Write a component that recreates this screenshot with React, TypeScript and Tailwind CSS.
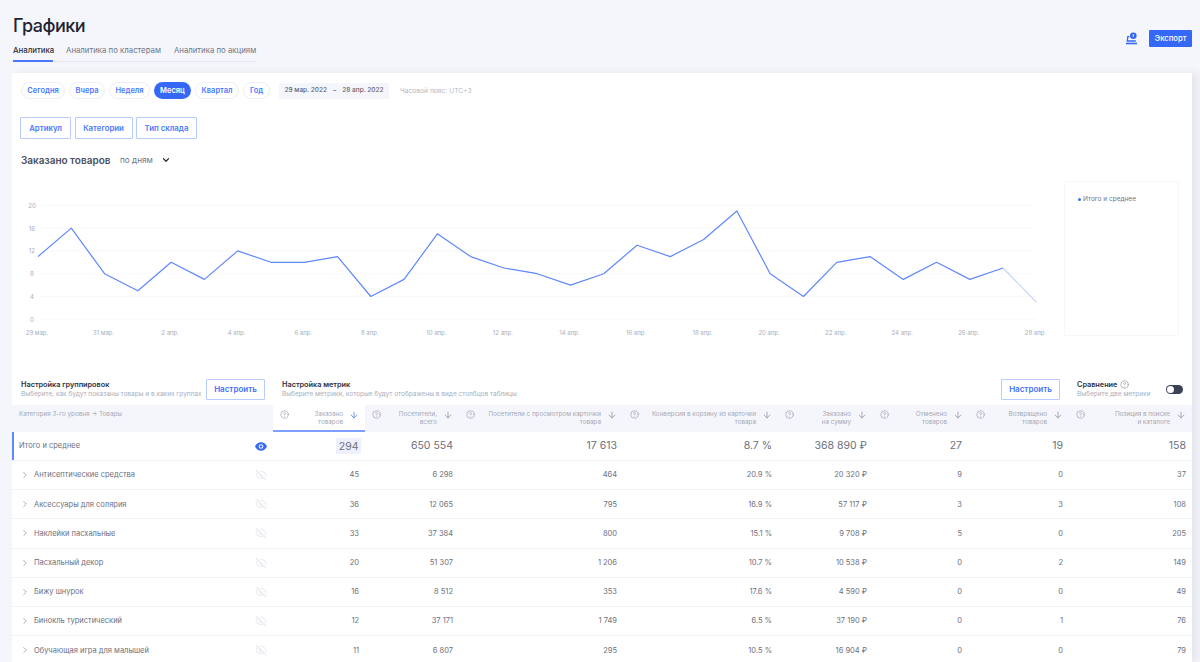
import React from "react";
import { ArrowDown, ChevronDown, ChevronRight, CircleHelp, EyeOff } from "lucide-react";

const data = [11, 16, 8, 5, 10, 7, 12, 10, 10, 11, 4, 7, 15, 11, 9, 8, 6, 8, 13, 11, 14, 19, 8, 4, 10, 11, 7, 10, 7, 9, 3];
const X = (i: number) => 26 + i * 33.28;
const Y = (v: number) => 152.3 - v * 5.7;
const labels = ["29 мар.", "31 мар.", "2 апр.", "4 апр.", "6 апр.", "8 апр.", "10 апр.", "12 апр.", "14 апр.", "16 апр.", "18 апр.", "20 апр.", "22 апр.", "24 апр.", "26 апр.", "28 апр."];

const periods = [
  { t: "Сегодня", w: "w-[44px]" },
  { t: "Вчера", w: "w-[36px]" },
  { t: "Неделя", w: "w-[41px]" },
  { t: "Месяц", w: "w-[37px]", active: true },
  { t: "Квартал", w: "w-[44px]" },
  { t: "Год", w: "w-[27px]" },
];

const headers = [
  { t: "Заказано\nтоваров", active: true },
  { t: "Посетители,\nвсего" },
  { t: "Посетители с просмотром карточки\nтовара" },
  { t: "Конверсия в корзину из карточки\nтовара" },
  { t: "Заказано\nна сумму" },
  { t: "Отменено\nтоваров" },
  { t: "Возвращено\nтоваров" },
  { t: "Позиция в поиске\nи каталоге" },
];

const rows = [
  ["Антисептические средства", "45", "6 298", "464", "20.9 %", "20 320 ₽", "9", "0", "37"],
  ["Аксессуары для солярия", "36", "12 065", "795", "16.9 %", "57 117 ₽", "3", "3", "108"],
  ["Наклейки пасхальные", "33", "37 384", "800", "15.1 %", "9 708 ₽", "5", "0", "205"],
  ["Пасхальный декор", "20", "51 307", "1 206", "10.7 %", "10 538 ₽", "0", "2", "149"],
  ["Бижу шнурок", "16", "8 512", "353", "17.6 %", "4 590 ₽", "0", "0", "49"],
  ["Бинокль туристический", "12", "37 171", "1 749", "6.5 %", "37 190 ₽", "0", "1", "76"],
  ["Обучающая игра для малышей", "11", "6 807", "295", "10.5 %", "16 904 ₽", "0", "0", "79"],
];

const cols = "grid grid-cols-[261px_92px_94px_164px_155px_95px_96px_100px_123px]";

function ConfigButton() {
  return (
    <button className="w-[59px] h-[21px] border border-[#b9ccff] rounded-[1px] bg-white text-[#3f6ffb] text-[8px] font-semibold">
      Настроить
    </button>
  );
}

function SolidEye() {
  return (
    <svg width="12" height="9" viewBox="0 0 12 9" aria-hidden="true">
      <path d="M0 4.5C1.4 1.7 3.5.3 6 .3s4.6 1.4 6 4.2C10.6 7.3 8.5 8.7 6 8.7S1.4 7.3 0 4.5Z" fill="#3568f6" />
      <circle cx="6" cy="4.5" r="2.3" fill="#fff" />
      <circle cx="6" cy="4.5" r="1.3" fill="#3568f6" />
    </svg>
  );
}

export default function App() {
  return (
    <div className="w-[1200px] h-[662px] overflow-hidden bg-[#f5f6fb] font-['Inter',sans-serif] text-[#6b7280]">
      <header className="h-[73px] pl-[13px] pr-[8px] flex justify-between">
        <div className="pt-[14px]">
          <h1 className="text-[18px] leading-[24px] tracking-[-0.5px] font-medium text-[#1f2433]">Графики</h1>
          <nav className="mt-[3px] w-[243px] flex gap-[13px] border-b border-[#e6e8f0] h-[21px] text-[7.8px] leading-[14px] pt-[2px] text-[#6f7585] whitespace-nowrap">
            <span className="w-[40px] h-[19px] border-b-2 border-[#4a78ff] text-[#2b3040] font-medium">Аналитика</span>
            <span>Аналитика по кластерам</span>
            <span>Аналитика по акциям</span>
          </nav>
        </div>
        <div className="flex items-center gap-[12px] h-[77px]">
          <svg width="13" height="13" viewBox="0 0 13 13" fill="none" aria-hidden="true">
            <circle cx="9.3" cy="3.7" r="3.3" fill="#3568f6" />
            <rect x="8.8" y="2.2" width="1" height="2.6" fill="#fff" />
            <path d="M5.5 4.7H3.8L3.3 9H11.8" stroke="#3568f6" strokeWidth="1.3" />
            <path d="M2 11.5H13" stroke="#3568f6" strokeWidth="1.6" />
          </svg>
          <button className="w-[43px] h-[17px] rounded-[1px] bg-[#3568f6] text-white text-[7.7px] font-medium">Экспорт</button>
        </div>
      </header>

      <main className="w-[1180px] ml-[12px] bg-white shadow-[6px_0_8px_rgba(30,40,70,0.07)] h-[589px]">
        <div className="pt-[9px] pl-[9px] flex items-center h-[26px]">
          <div className="flex gap-[4px]">
            {periods.map((p) => (
              <span
                key={p.t}
                className={`${p.w} h-[17px] rounded-full flex items-center justify-center text-[7.5px] font-semibold ${
                  p.active ? "bg-[#3568f6] text-white" : "border border-[#eceef4] text-[#4a78ff]"
                }`}
              >
                {p.t}
              </span>
            ))}
          </div>
          <div className="ml-[9px] w-[110px] h-[16px] mt-[1px] bg-[#f5f6fb] rounded-[1px] flex items-center justify-center gap-[6px] text-[6.5px] font-medium text-[#5b6170]">
            <span>29 мар. 2022</span>
            <span>–</span>
            <span>28 апр. 2022</span>
          </div>
          <span className="ml-[11px] mt-[1px] text-[6.7px] text-[#b4b8c4]">Часовой пояс: UTC+3</span>
        </div>

        <div className="mt-[18px] pl-[8px] flex gap-[3.5px]">
          {["Артикул", "Категории", "Тип склада"].map((t, i) => (
            <span
              key={t}
              className={`${["w-[51px]", "w-[58px]", "w-[61px]"][i]} h-[22px] pt-[1px] flex items-center justify-center border border-[#b9ccff] rounded-[1px] text-[7.8px] font-semibold text-[#4a78ff]`}
            >
              {t}
            </span>
          ))}
        </div>

        <div className="mt-[14px] pl-[9px] flex items-center h-[14px]">
          <h2 className="w-[89px] text-[10px] font-semibold text-[#4b5160] whitespace-nowrap">Заказано товаров</h2>
          <span className="ml-[10px] text-[8.2px] text-[#6f7585]">по дням</span>
          <ChevronDown className="ml-[8px] text-[#2b3040]" size={10} strokeWidth={3} />
        </div>

        <div className="h-[206px] flex items-start">
          <svg width="1052" height="185" viewBox="0 0 1052 185" className="block">
            {[20, 16, 12, 8, 4, 0].map((v) => (
              <g key={v}>
                <line x1="29" x2="1024" y1={Y(v)} y2={Y(v)} stroke="#f8f9fb" />
                <text x="20" y={Y(v) + 2.5} textAnchor="middle" fontSize="6.2" fill="#a9aebb">{v}</text>
              </g>
            ))}
            {labels.map((l, i) => (
              <text key={l} x={X(i * 2) - 1} y="168" textAnchor="middle" fontSize="6" fill="#a9aebb">{l}</text>
            ))}
            <polyline
              points={data.slice(0, 30).map((v, i) => `${X(i)},${Y(v)}`).join(" ")}
              fill="none"
              stroke="#5f88fa"
              strokeWidth="1.2"
              strokeLinejoin="round"
            />
            <line x1={X(29)} y1={Y(9)} x2={X(30)} y2={Y(3)} stroke="#c5d4fd" strokeWidth="1.2" />
          </svg>
          <aside className="mt-[14px] w-[115px] h-[155px] border border-[#f6f7fa] rounded-[2px] pt-[12px] pl-[13px] flex items-start">
            <span className="mt-[3.5px] w-[3px] h-[3px] rounded-full bg-[#3f6ffb]" />
            <span className="ml-[2px] text-[6.5px] leading-[10px] text-[#6f7585]">Итого и среднее</span>
          </aside>
        </div>

        <div className="h-[32px] flex items-center pl-[9px] pr-[9px]">
          <div className="w-[185px]">
            <div className="text-[7.3px] leading-[11px] font-semibold text-[#2b3040]">Настройка группировок</div>
            <div className="text-[6.5px] leading-[9px] text-[#a9aebb] whitespace-nowrap">Выберите, как будут показаны товары и в каких группах</div>
          </div>
          <ConfigButton />
          <div className="ml-[17px] w-[719px]">
            <div className="text-[7.3px] leading-[11px] font-semibold text-[#2b3040]">Настройка метрик</div>
            <div className="text-[6.5px] leading-[9px] text-[#a9aebb] whitespace-nowrap">Выберите метрики, которые будут отображены в виде столбцов таблицы</div>
          </div>
          <ConfigButton />
          <div className="ml-[17px] w-[73px]">
            <div className="flex items-center gap-[3px] text-[7.3px] leading-[11px] font-semibold text-[#2b3040]">
              Сравнение <CircleHelp size={9} className="text-[#7b8090]" strokeWidth={1.5} />
            </div>
            <div className="text-[6.5px] leading-[9px] text-[#a9aebb] whitespace-nowrap">Выберите две метрики</div>
          </div>
          <span className="ml-[16px] w-[17px] h-[9px] rounded-full bg-[#3b4256] flex items-center pl-[1px]">
            <span className="w-[7px] h-[7px] rounded-full bg-white" />
          </span>
        </div>

        <div className={`${cols} h-[27px] bg-[#f5f6fb] text-[6.3px] leading-[8.4px] text-[#a4a9b6]`}>
          <div className="pl-[7px] pt-[5px]">Категория 3-го уровня → Товары</div>
          {headers.map((h) => (
            <div
              key={h.t}
              className={`flex items-start pl-[7px] pr-[6px] pt-[5px] ${h.active ? "bg-white border-b-2 border-[#7ea0ff]" : ""}`}
            >
              <CircleHelp size={9} strokeWidth={1.5} className="shrink-0 text-[#8a8f9e]" />
              <div className="flex-1 text-right whitespace-pre-line">{h.t}</div>
              <ArrowDown
                size={10}
                strokeWidth={1.8}
                className={`ml-[6px] shrink-0 ${h.active ? "text-[#4a78ff]" : "text-[#8a8f9e]"}`}
              />
            </div>
          ))}
        </div>

        <div className={`${cols} h-[29px] border-b border-[#f1f2f6] items-center text-[10.5px] text-[#6b7080]`}>
          <div className="h-full flex items-center justify-between border-l-2 border-[#5f88fa] pl-[5px] pr-[6px] text-[7.5px] text-[#6b7080]">
            <span>Итого и среднее</span>
            <SolidEye />
          </div>
          <div className="text-right pr-[4px]">
            <span className="bg-[#eef1fb] px-[2.5px] py-[1.5px]">294</span>
          </div>
          {["650 554", "17 613", "8.7 %", "368 890 ₽", "27", "19", "158"].map((v, i) => (
            <div key={v} className={`text-right ${i === 4 ? "pr-[7px]" : "pr-[6px]"}`}>{v}</div>
          ))}
        </div>

        {rows.map((r) => (
          <div key={r[0]} className={`${cols} h-[29.2px] border-b border-[#f1f2f6] items-center text-[7.5px] text-[#6b7080]`}>
            <div className="flex items-center pl-[8px] pr-[6px]">
              <ChevronRight size={10} strokeWidth={1.5} className="text-[#7b8090]" />
              <span className="ml-[4px] flex-1">{r[0]}</span>
              <EyeOff size={12} strokeWidth={2.2} className="text-[#eaecf1]" />
            </div>
            {r.slice(1).map((v, i) => (
              <div key={i} className={`text-right ${i === 5 ? "pr-[7px]" : "pr-[6px]"}`}>{v}</div>
            ))}
          </div>
        ))}
      </main>
    </div>
  );
}
